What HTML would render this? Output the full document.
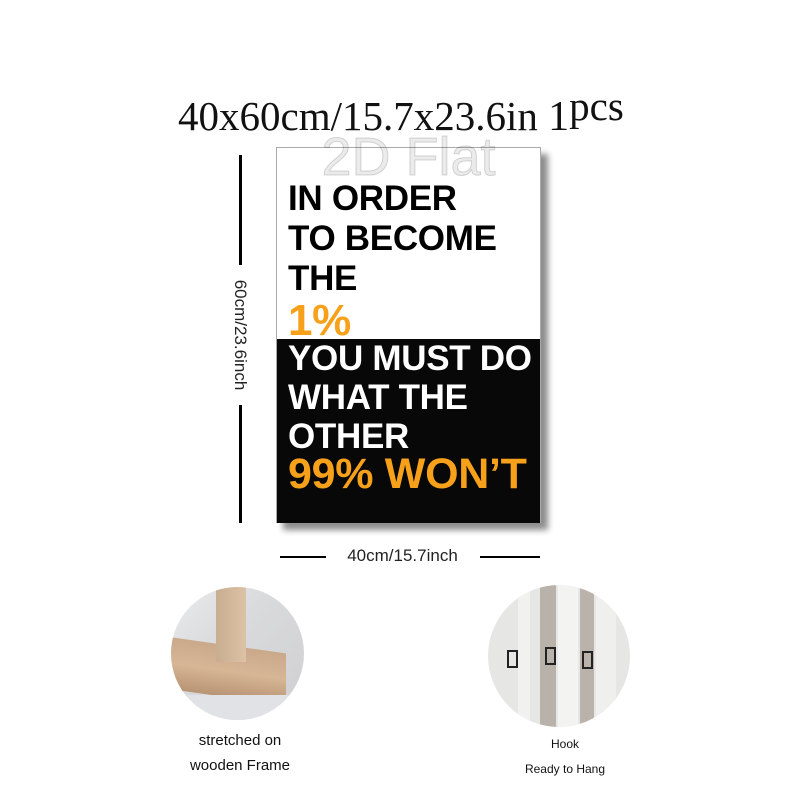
<!DOCTYPE html>
<html><head><style>
body{margin:0;width:800px;height:800px;background:#fff;position:relative;overflow:hidden;font-family:"Liberation Sans",sans-serif}
.a{position:absolute}
.title{left:178px;top:92px;font-family:"Liberation Serif",serif;font-size:41px;color:#111;white-space:nowrap}
.poster{left:276px;top:147px;width:265px;height:376px;background:#fff;border:1px solid #aaa;box-sizing:border-box;box-shadow:7px 7px 6px rgba(0,0,0,.45)}
.blk{left:0;top:191px;width:263px;height:184px;background:#080808}
.t{left:11px;font-weight:bold;font-size:35px;line-height:39px;white-space:nowrap;letter-spacing:-0.3px}
.wm{left:0;top:-22px;width:263px;text-align:center;font-size:54px;color:rgba(0,0,0,.08);font-family:"Liberation Sans",sans-serif;-webkit-text-stroke:1px rgba(0,0,0,.15)}
</style></head><body>
<div class="a title">40x60cm/15.7x23.6in <span style="font-size:42px">1</span><span style="position:relative;top:-10px">pcs</span></div>
<div class="a" style="left:239px;top:155px;width:3px;height:110px;background:#000"></div>
<div class="a" style="left:239px;top:405px;width:3px;height:118px;background:#000"></div>
<div class="a" style="left:170px;top:325px;width:140px;text-align:center;transform:rotate(90deg);font-size:17px;color:#222">60cm/23.6inch</div>
<div class="a" style="left:280px;top:556px;width:46px;height:2px;background:#000"></div>
<div class="a" style="left:480px;top:556px;width:60px;height:2px;background:#000"></div>
<div class="a" style="left:330px;top:546px;width:145px;text-align:center;font-size:17px;color:#222">40cm/15.7inch</div>
<div class="a poster">
<div class="a wm">2D Flat</div>
<div class="a blk"></div>
<div class="a t" style="top:31px;color:#000">IN ORDER</div>
<div class="a t" style="top:71px;color:#000">TO BECOME</div>
<div class="a t" style="top:111px;color:#000">THE</div>
<div class="a t" style="top:149px;color:#f7a11a;font-size:44px;line-height:48px">1%</div>
<div class="a t" style="top:191px;color:#fff">YOU MUST DO</div>
<div class="a t" style="top:230px;color:#fff">WHAT THE</div>
<div class="a t" style="top:269px;color:#fff">OTHER</div>
<div class="a t" style="top:302px;color:#f7a11a;font-size:43px;line-height:48px">99% WON’T</div>
</div>
<div class="a" style="left:171px;top:587px;width:133px;height:133px;border-radius:50%;background:linear-gradient(135deg,#e9ebec 0%,#d9dadc 40%,#cfcfd1 100%);overflow:hidden">
<div class="a" style="left:-5px;top:58px;width:120px;height:52px;background:linear-gradient(#c9a98a,#d6b695 50%,#b89474);transform:skewY(8deg)"></div>
<div class="a" style="left:45px;top:0;width:30px;height:75px;background:linear-gradient(90deg,#c9ad90,#dcc2a6)"></div>
<div class="a" style="left:0;top:108px;width:133px;height:30px;background:#e1e2e5"></div>
</div>
<div class="a" style="left:488px;top:585px;width:142px;height:142px;border-radius:50%;background:#e6e6e4;overflow:hidden">
<div class="a" style="left:30px;top:0;width:12px;height:142px;background:#f1f1ef"></div>
<div class="a" style="left:52px;top:0;width:16px;height:142px;background:#b8b2aa"></div>
<div class="a" style="left:70px;top:0;width:20px;height:142px;background:#f3f3f1"></div>
<div class="a" style="left:92px;top:0;width:14px;height:142px;background:#b9b3ab"></div>
<div class="a" style="left:108px;top:0;width:20px;height:142px;background:#efefed"></div>
<div class="a" style="left:19px;top:65px;width:7px;height:14px;border:2px solid #222"></div>
<div class="a" style="left:57px;top:62px;width:7px;height:14px;border:2px solid #222"></div>
<div class="a" style="left:94px;top:66px;width:7px;height:14px;border:2px solid #222"></div>
</div>
<div class="a" style="left:170px;top:728px;width:140px;text-align:center;font-size:15px;line-height:25px;color:#111">stretched on<br>wooden Frame</div>
<div class="a" style="left:500px;top:732px;width:130px;text-align:center;font-size:12px;line-height:25px;color:#111">Hook<br>Ready to Hang</div>
</body></html>
